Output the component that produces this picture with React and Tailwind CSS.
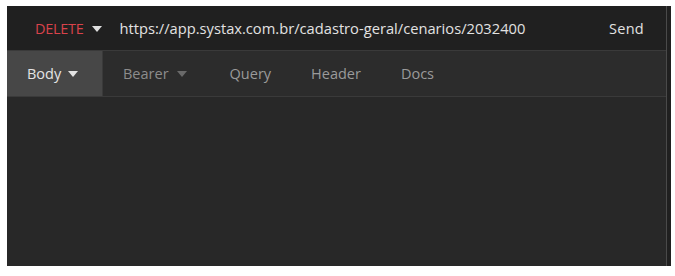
import { useState } from 'react'

function Caret({ className }) {
  return (
    <svg width="10" height="6" viewBox="0 0 10 6" className={className}>
      <path d="M0 0 L10 0 L5 6 Z" fill="currentColor" />
    </svg>
  )
}

export default function App() {
  const [method] = useState('DELETE')
  const [url] = useState('https://app.systax.com.br/cadastro-geral/cenarios/2032400')
  const tabs = ['Query', 'Header', 'Docs']

  return (
    <div
      className="w-[675px] h-[276px] bg-white pt-[6px] pl-[7px] pr-[4px] pb-[10px]"
      style={{ fontFamily: '"Open Sans", "Noto Sans", sans-serif' }}
    >
      <div className="h-full flex flex-col bg-[#282828] border-r-[4px] border-[#202020]">
        <div className="flex h-full flex-col border-r border-[#4a4a4a]">
          {/* Url bar */}
          <div className="h-[45px] flex items-center pt-[1px] bg-[#202020] border-b border-[#3a3a3a] text-[14.5px]">
            <button className="flex items-center gap-[9px] pl-[28px] pr-[17px] text-[#d9434b]">
              <span className="tracking-[-0.3px]">{method}</span>
              <Caret className="text-[#e0e0e0] mt-[1px]" />
            </button>
            <div className="flex-1 text-[14.7px] text-[#e2e2e2] truncate">{url}</div>
            <button className="pr-[22px] pl-4 text-[#e2e2e2] tracking-[0.3px]">Send</button>
          </div>

          {/* Tabs */}
          <div className="h-[46px] flex items-stretch bg-[#2c2c2c] border-b border-[#3a3a3a] text-[14.5px]">
            <button className="w-[96px] flex items-center gap-[7px] pl-[20px] bg-[#474747] border-r border-[#3a3a3a] text-[#e4e4e4]">
              <span>Body</span>
              <Caret className="text-[#e4e4e4] mt-[1px]" />
            </button>
            <button className="flex items-center gap-[8px] pl-[20px] pr-[23px] text-[#8c8c8c]">
              <span>Bearer</span>
              <Caret className="text-[#6a6a6a] mt-[1px]" />
            </button>
            {tabs.map(t => (
              <button key={t} className="flex items-center px-[20px] text-[#9a9a9a]">
                {t}
              </button>
            ))}
          </div>

          {/* Body */}
          <div className="flex-1 bg-[#282828]" />
        </div>
      </div>
    </div>
  )
}
